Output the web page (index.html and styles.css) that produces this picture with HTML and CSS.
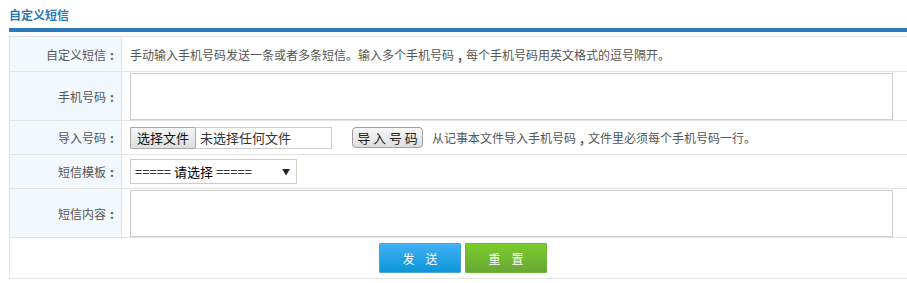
FILE: index.html
```html
<!DOCTYPE html>
<html lang="zh">
<head>
<meta charset="utf-8">
<title>自定义短信</title>
<link rel="stylesheet" href="styles.css">
</head>
<body>
<div class="page">
  <div class="title">自定义短信</div>
  <div class="bar"></div>
  <table class="form">
    <tr class="r1">
      <th>自定义短信<span class="p">:</span></th>
      <td>手动输入手机号码发送一条或者多条短信。输入多个手机号码<span class="p">,</span>每个手机号码用英文格式的逗号隔开。</td>
    </tr>
    <tr class="r2">
      <th>手机号码<span class="p">:</span></th>
      <td><textarea class="ta"></textarea></td>
    </tr>
    <tr class="r3">
      <th>导入号码<span class="p">:</span></th>
      <td>
        <div class="line">
          <div class="file"><span class="filebtn">选择文件</span><span class="filetxt">未选择任何文件</span></div>
          <button class="imp" type="button">导 入 号 码</button>
          <span class="hint">从记事本文件导入手机号码<span class="p">,</span>文件里必须每个手机号码一行。</span>
        </div>
      </td>
    </tr>
    <tr class="r4">
      <th>短信模板<span class="p">:</span></th>
      <td><div class="sel"><span>===== 请选择 =====</span><span class="arr">▼</span></div></td>
    </tr>
    <tr class="r5">
      <th>短信内容<span class="p">:</span></th>
      <td><textarea class="ta"></textarea></td>
    </tr>
    <tr class="r6">
      <td colspan="2" class="btns">
        <div class="btnrow">
          <button class="btn send" type="button">发送</button>
          <button class="btn reset" type="button">重置</button>
        </div>
      </td>
    </tr>
  </table>
</div>
</body>
</html>
```

FILE: styles.css
```css
html, body { margin: 0; padding: 0; background: #fff; overflow: hidden; }
body { font-family: "Noto Sans CJK SC", "Noto Sans", sans-serif; font-size: 12px; color: #555; }
.page { padding: 0 0 0 9px; width: 908px; }
.title { height: 28px; line-height: 29px; color: #2a78b6; font-weight: bold; font-size: 12px; }
.bar { height: 4px; background: #2a7ab9; margin-bottom: 4px; }
.form { border-collapse: collapse; width: 908px; table-layout: fixed; }
.form th, .form td { border: 1px solid #e3e3e3; padding: 0; }
.form th { width: 108px; background: #f1f8fe; text-align: right; font-weight: normal; padding-right: 3px; color: #555; }
.form td { padding-left: 8px; vertical-align: middle; }
.p { display: inline-block; width: 12px; text-align: center; font-weight: bold; }
.r1 th, .r1 td { height: 34px; }
.r2 th, .r2 td { height: 48px; }
.r3 th, .r3 td { height: 33px; }
.r4 th, .r4 td { height: 33px; }
.r5 th, .r5 td { height: 48px; }
.r6 td { height: 40px; }
.ta { display: block; width: 763px; height: 47px; border: 1px solid #ccc; margin: 0; padding: 0; resize: none; box-sizing: border-box; font-family: inherit; }
.line { display: flex; align-items: center; }
.file { display: flex; align-items: center; width: 202px; height: 22px; border: 1px solid #ccc; box-sizing: border-box; border-left: none; }
.filebtn { height: 22px; box-sizing: border-box; border: 1px solid #a9a9a9; border-radius: 2px; background: linear-gradient(#f6f6f6, #dedede); color: #111; padding: 0 6px; line-height: 19px; font-size: 13px; }
.filetxt { padding-left: 4px; color: #333; font-size: 13px; }
.imp { margin-left: 20px; height: 21px; width: 71px; padding: 0; border: 1px solid #a0a0a0; border-radius: 4px; background: linear-gradient(#f8f8f8, #dddddd); font-family: inherit; font-size: 13px; color: #222; line-height: 18px; }
.hint { margin-left: 9px; color: #555; }
.sel { display: flex; justify-content: space-between; align-items: center; width: 167px; height: 25px; box-sizing: border-box; border: 1px solid #ccc; padding: 0 6px 0 4px; color: #000; font-size: 13px; background: #fff; }
.arr { font-size: 8px; color: #222; }
.btns { padding: 0 !important; }
.btnrow { display: flex; justify-content: center; gap: 4px; }
.btn { width: 82px; height: 30px; border: 1px solid; border-radius: 1px; color: #fff; font-family: inherit; font-size: 12px; padding: 0 0 0 11px; letter-spacing: 11px; }
.send { background: linear-gradient(#42b0f4, #0a97d9); border-color: #4ba4dc; }
.reset { background: linear-gradient(#7bcc2c, #68a835); border-color: #6cb53a; }
```
